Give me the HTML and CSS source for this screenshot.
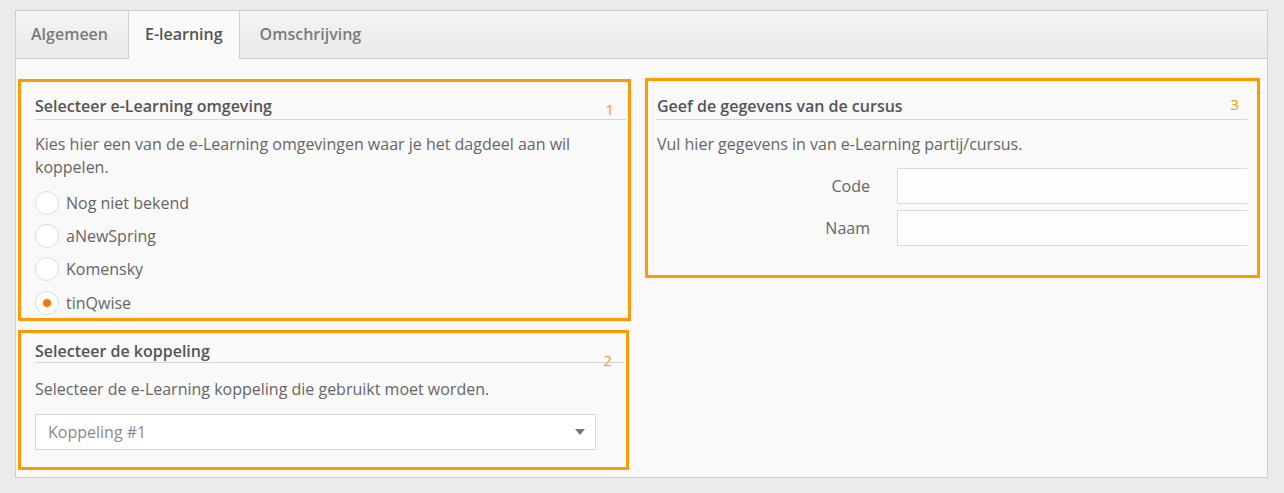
FILE: index.html
```html
<!DOCTYPE html>
<html>
<head>
<meta name="viewport" content="width=device-width, initial-scale=1">
<link rel="stylesheet" href="styles.css">
</head>
<body>

<div class="panel">
  <div class="tabs">
    <div class="tab">Algemeen</div>
    <div class="tab active">E-learning</div>
    <div class="tab">Omschrijving</div>
  </div>

  <div class="content">
    <div class="column left">
      <div class="box box1">
        <span class="num num1">1</span>
        <h3>Selecteer e-Learning omgeving</h3>
        <p class="desc">Kies hier een van de e-Learning omgevingen waar je het dagdeel aan wil koppelen.</p>
        <div class="radios">
          <label class="radio"><span class="dot"></span>Nog niet bekend</label>
          <label class="radio"><span class="dot"></span>aNewSpring</label>
          <label class="radio"><span class="dot"></span>Komensky</label>
          <label class="radio checked"><span class="dot"></span>tinQwise</label>
        </div>
      </div>

      <div class="box box2">
        <span class="num num2">2</span>
        <h3>Selecteer de koppeling</h3>
        <p class="desc">Selecteer de e-Learning koppeling die gebruikt moet worden.</p>
        <div class="select">
          <span>Koppeling #1</span>
          <span class="caret"></span>
        </div>
      </div>
    </div>

    <div class="column right">
      <div class="box box3">
        <span class="num num3">3</span>
        <h3>Geef de gegevens van de cursus</h3>
        <p class="desc">Vul hier gegevens in van e-Learning partij/cursus.</p>
        <div class="row">
          <label>Code</label>
          <div class="input"></div>
        </div>
        <div class="row">
          <label>Naam</label>
          <div class="input"></div>
        </div>
      </div>
    </div>
  </div>
</div>

</body>
</html>
```

FILE: styles.css
```css
* {
  box-sizing: border-box;
}

body {
  margin: 0;
  background: #ebebeb;
  font-family: "Open Sans", "Liberation Sans", sans-serif;
  color: #666;
}

.panel {
  margin: 10px 0 0 15px;
  width: 1253px;
  height: 468px;
  border: 1px solid #cfcfcf;
  background: #f9f9f9;
}

/* tab bar */
.tabs {
  display: flex;
  height: 48px;
  background: linear-gradient(#f4f4f4, #e9e9e9);
  border-bottom: 1px solid #d0d0d0;
}

.tab {
  padding: 0 18px;
  line-height: 47px;
  font-size: 16px;
  font-weight: 600;
  color: #7b7b7b;
}

.tab:first-child {
  padding-left: 15px;
  padding-right: 20px;
}

.tab.active {
  background: #fafafa;
  color: #555;
  border-left: 1px solid #d0d0d0;
  border-right: 1px solid #d0d0d0;
  height: 48px;
  padding: 0 16px 0 16px;
}

.tab.active + .tab {
  padding-left: 20px;
}

/* sections */
.content {
  display: flex;
  gap: 14px;
  padding: 19px 0 0 2px;
}

.column.left {
  width: 613px;
}

.column.right {
  width: 615px;
}

.box {
  position: relative;
  border: 3px solid #ff9a00;
}

.box h3 {
  margin: 0;
  font-size: 16px;
  font-weight: 600;
  line-height: 22px;
  color: #555;
  padding-bottom: 2px;
  border-bottom: 1px solid #d6d6d6;
}

.desc {
  margin: 13px 0 0;
  font-size: 16px;
  line-height: 23px;
  color: #666;
}

.box1 {
  margin-top: 1px;
  height: 242px;
  padding: 13px 2px 0 14px;
}

.box2 {
  margin-top: 9px;
  width: 611px;
  height: 140px;
  padding: 7px 2px 0 14px;
}

.box2 h3 {
  padding-bottom: 0;
}

.box2 .desc {
  margin-top: 15px;
}

.box3 {
  height: 200px;
  padding: 14px 10px 0 9px;
}

/* numbers in the corners */
.num {
  position: absolute;
  font-size: 15px;
  line-height: 15px;
  color: #ff9a00;
}

.num1 {
  top: 20px;
  right: 14px;
}

.num2 {
  top: 20px;
  right: 14px;
}

.num3 {
  top: 16px;
  right: 18px;
}

/* radio list */
.radios {
  margin-top: 7px;
}

.radio {
  display: flex;
  align-items: center;
  height: 33.3px;
  font-size: 16px;
  color: #666;
}

.dot {
  position: relative;
  width: 24px;
  height: 24px;
  margin-right: 7px;
  border: 1px solid #dcdcdc;
  border-radius: 50%;
  background: #fff;
}

.radio.checked .dot::after {
  content: "";
  position: absolute;
  top: 7px;
  left: 7px;
  width: 8px;
  height: 8px;
  border-radius: 50%;
  background: #fa7a00;
}

/* dropdown */
.select {
  display: flex;
  align-items: center;
  justify-content: space-between;
  margin-top: 13px;
  width: 561px;
  height: 36px;
  padding: 0 10px 0 12px;
  background: #fff;
  border: 1px solid #d8d8d8;
  font-size: 16px;
  color: #8a8a8a;
}

.caret {
  width: 0;
  height: 0;
  border-left: 5px solid transparent;
  border-right: 5px solid transparent;
  border-top: 6px solid #777;
}

/* form rows */
.row {
  display: flex;
  align-items: center;
  margin-top: 6px;
}

.desc + .row {
  margin-top: 12px;
}

.row label {
  width: 213px;
  text-align: right;
  font-size: 16px;
  color: #666;
}

.input {
  margin-left: 27px;
  flex: 1;
  height: 36px;
  background: #fefefe;
  border: 1px solid #dadada;
  border-right: none;
}
```
